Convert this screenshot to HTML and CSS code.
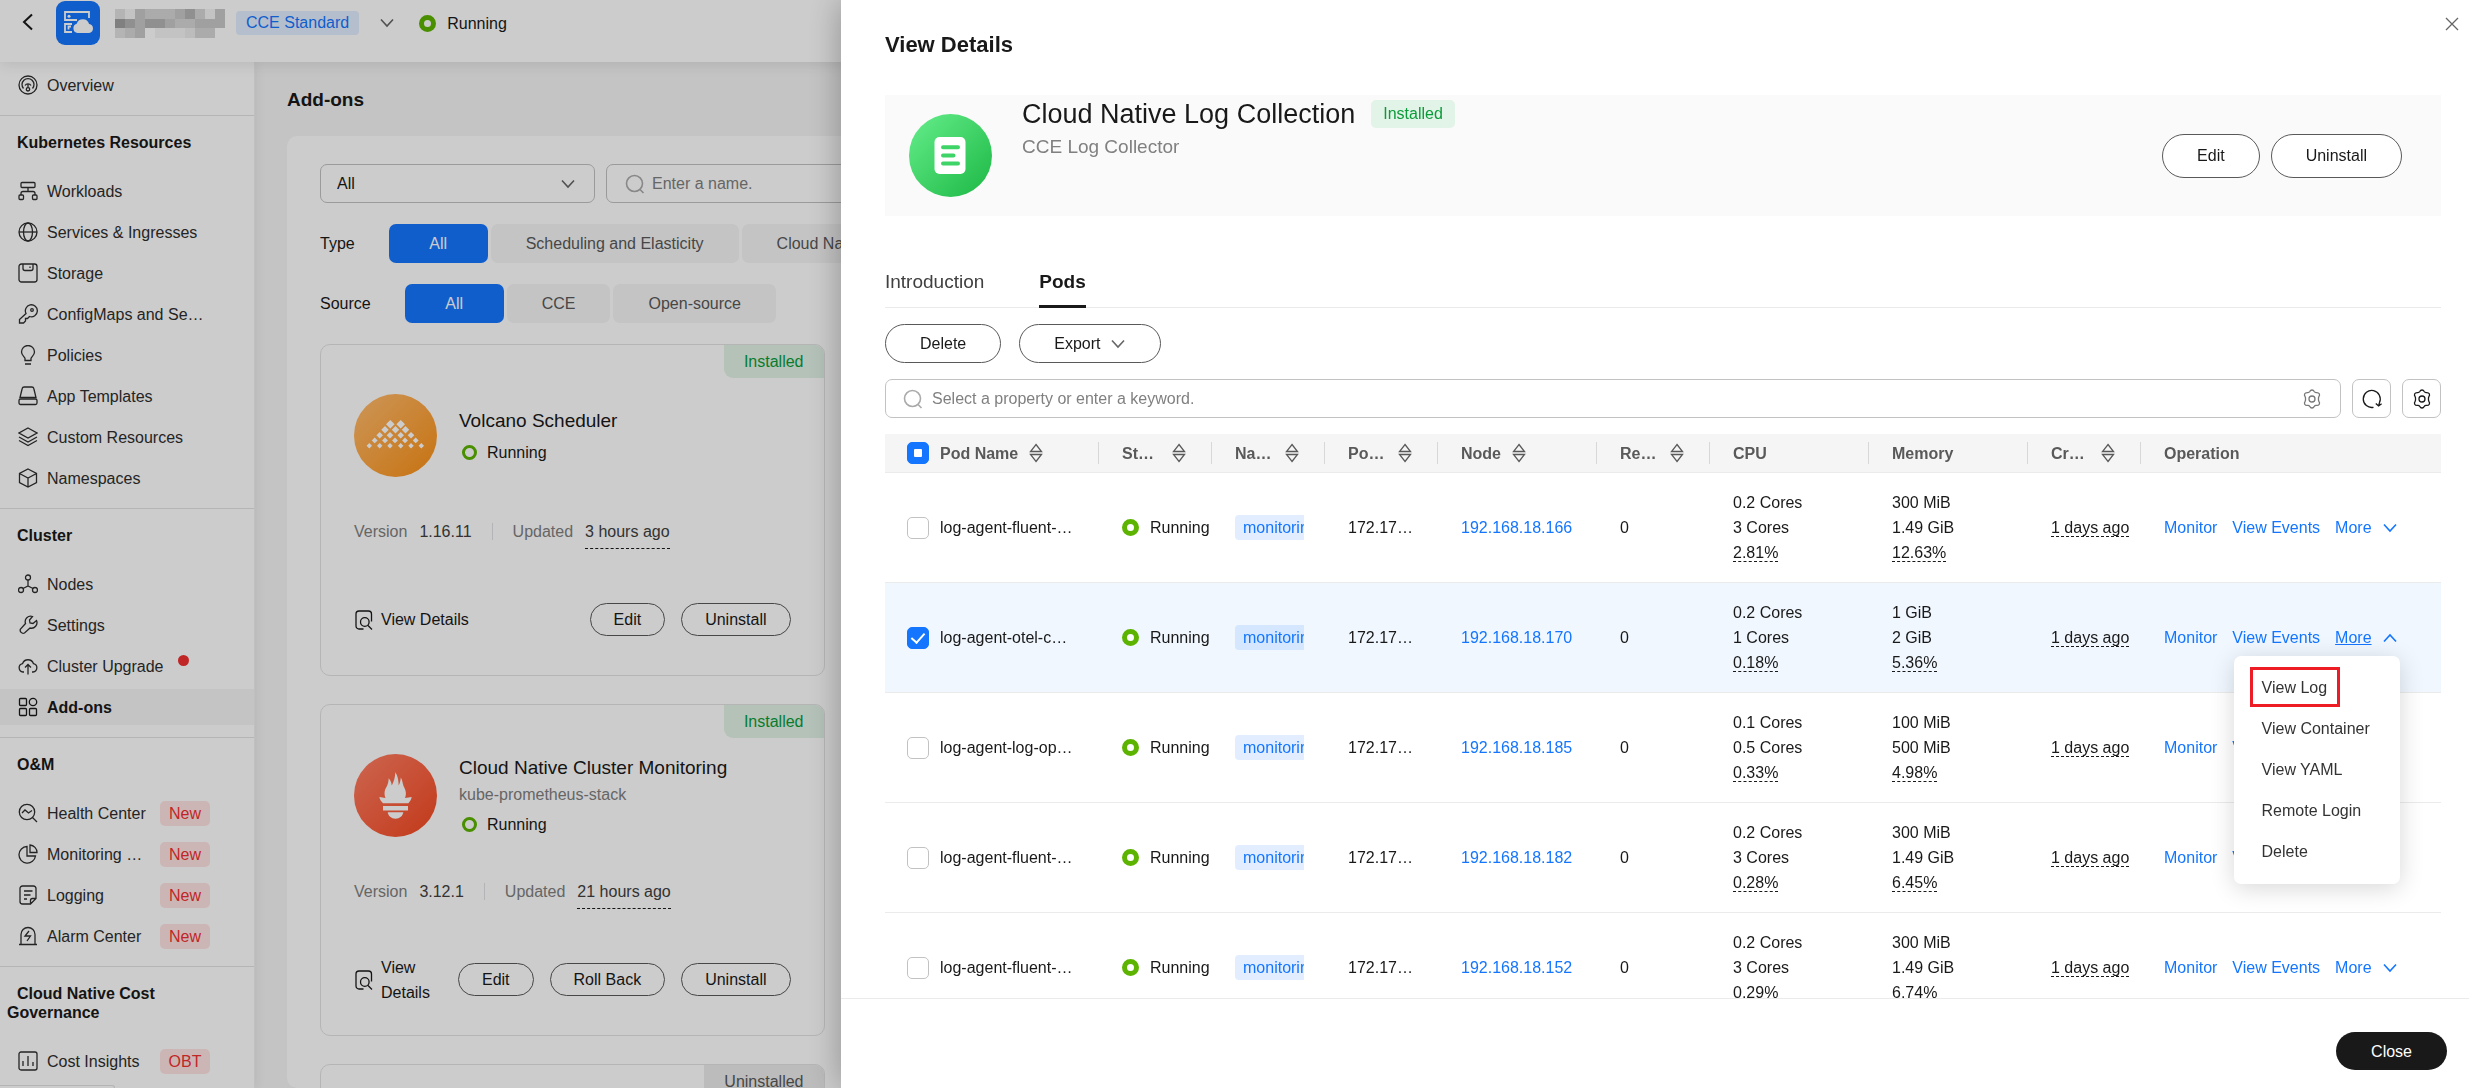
FILE: index.html
```html
<!DOCTYPE html>
<html lang="en">
<head>
    <meta charset="UTF-8">
    <meta name="viewport" content="width=device-width, initial-scale=1.0">
    <title>Add-ons - CCE</title>
    <link rel="stylesheet" href="styles.css">
</head>
<body>
    <!-- Shared icons -->
    <svg class="sprite" aria-hidden="true">
        <symbol id="i-chevron" viewBox="0 0 16 16"><path d="M2 4.5l6 6.5 6-6.5" /></symbol>
        <symbol id="i-search" viewBox="0 0 20 20"><circle cx="9.5" cy="9.5" r="8" /><path d="M15 15.5l3.5 3.5" /></symbol>
        <symbol id="i-sort" viewBox="0 0 14 20"><path d="M7 1.500l5.500 7h-11zM7 18.500l5.500-7h-11z" /></symbol>
        <symbol id="i-gear" viewBox="0 0 20 20"><path d="M10 1c1.200 0 1.700.5 2.200 1.500.5.9 1.200 1.200 2.200 1.100 1.400-.1 2.300.1 2.900 1.200.6 1.100.3 1.800-.4 2.800-.6.9-.6 3.900 0 4.800.7 1 1 1.700.4 2.800-.6 1.100-1.500 1.300-2.900 1.200-1-.1-1.700.2-2.200 1.100-.5 1-1 1.500-2.200 1.500s-1.700-.5-2.200-1.500c-.5-.9-1.200-1.200-2.200-1.100-1.400.1-2.300-.1-2.900-1.200-.6-1.100-.3-1.800.4-2.800.6-.9.6-3.900 0-4.800-.7-1-1-1.700-.4-2.800.6-1.100 1.500-1.300 2.900-1.200 1 .1 1.700-.2 2.200-1.100C8.300 1.500 8.800 1 10 1z" /><circle cx="10" cy="10" r="3" /></symbol>
        <symbol id="i-view" viewBox="0 0 20 20"><path d="M9.500 19H5a3 3 0 0 1-3-3V4a3 3 0 0 1 3-3h9.500a3 3 0 0 1 3 3v7.500" /><circle cx="10.8" cy="12" r="4.300" /><path d="M14 15.500l4 4" /></symbol>
    </svg>

    <header class="topbar">
        <button class="back" aria-label="Back"><svg viewBox="0 0 12 18"><path d="M10 1.500L2 9l8 7.500" /></svg></button>
        <svg class="logo" viewBox="0 0 44 44">
            <rect width="44" height="44" rx="9" fill="#1476ff" />
            <g fill="none" stroke="#fff" stroke-width="1.8"><path d="M33 17v-6H9v8h12M16 23H9v8h7" /><path d="M15 25.500h-2.500v3" /></g>
            <circle cx="13" cy="15.2" r="1.5" fill="#fff" />
            <path d="M21.500 32a4.800 4.800 0 0 1-.8-9.300 6.500 6.500 0 0 1 12.400.2A4.600 4.600 0 0 1 33 32z" fill="#fff" />
        </svg>
        <svg class="mosaic" viewBox="0 0 11 3" preserveAspectRatio="none" shape-rendering="crispEdges">
            <path fill="#e2e2e2" d="M0 0h1v1H0zM8 2h1v1H8zM0 2h1v1H0z" /><path fill="#f4f4f4" d="M1 0h1v1H1zM9 0h1v1H9zM4 2h3v1H4z" />
            <path fill="#c8c8c8" d="M2 0h1v1H2zM6 0h1v1H6zM10 0h1v1h-1zM2 1h1v1H2zM5 1h1v1H5zM8 1h3v1H8zM2 2h1v1H2z" />
            <path fill="#d6d6d6" d="M3 0h3v1H3zM8 0h1v1H8zM6 1h2v1H6zM1 2h1v1H1zM8 2h2v1H8z" /><path fill="#b5b5b5" d="M7 0h1v1H7zM1 1h1v1H1zM3 1h2v1H3z" />
            <path fill="#a0a0a0" d="M0 1h1v1H0z" /><path fill="#ececec" d="M7 2h1v1H7z" />
        </svg>
        <span class="chip">CCE Standard</span>
        <button class="switcher" aria-label="Switch cluster"><svg class="icon-sm"><use href="#i-chevron" /></svg></button>
        <span class="state"><i class="ring"></i>Running</span>
    </header>

    <div class="page">
        <nav class="sidebar">
            <ul class="menu menu-top">
                <li><a href="#"><svg viewBox="0 0 20 20"><circle cx="10" cy="10" r="9" /><path d="M5.500 13.500a6 6 0 1 1 9 0M7 10.500a3.500 3.500 0 0 1 6 0" /><circle cx="10" cy="14.3" r="1.7" /><path d="M10 9v3.600" /></svg>Overview</a></li>
            </ul>
            <section>
                <h2>Kubernetes Resources</h2>
                <ul class="menu">
                    <li><a href="#"><svg viewBox="0 0 20 20"><rect x="3" y="1.5" width="14" height="5" rx="1" /><path d="M10 6.500v4M3 14v-1.500q0-2 2-2h10q2 0 2 2V14" /><rect x="1" y="14" width="4.5" height="4.5" rx="1" /><rect x="14.5" y="14" width="4.5" height="4.5" rx="1" /></svg>Workloads</a></li>
                    <li><a href="#"><svg viewBox="0 0 20 20"><circle cx="10" cy="10" r="9" /><ellipse cx="10" cy="10" rx="4.5" ry="9" /><path d="M1 10h18" /></svg>Services &amp; Ingresses</a></li>
                    <li><a href="#"><svg viewBox="0 0 20 20"><rect x="1" y="1" width="18" height="18" rx="2.5" /><path d="M5 1v4.500q0 2 2 2h6q2 0 2-2V1M12 3.500v1.500" /></svg>Storage</a></li>
                    <li><a href="#"><svg viewBox="0 0 20 20"><path d="M8 9.500a6 6 0 1 1 3.500 3L9.500 14.500H7.500V17l-2 2H1.500v-3.500z" /><circle cx="14" cy="6" r="1.3" /></svg>ConfigMaps and Se…</a></li>
                    <li><a href="#"><svg viewBox="0 0 20 20"><path d="M7 15.500v-2c0-1.500-3.500-3-3.500-6.500a6.500 6.500 0 0 1 13 0c0 3.500-3.500 5-3.500 6.500v2zM7 19h6" /></svg>Policies</a></li>
                    <li><a href="#"><svg viewBox="0 0 20 20"><path d="M2 11.500l2.200-9q.3-1.500 2-1.500h7.600q1.700 0 2 1.500l2.200 9z" /><rect x="1" y="13" width="18" height="5.5" rx="1.5" /></svg>App Templates</a></li>
                    <li><a href="#"><svg viewBox="0 0 20 20"><path d="M10 1l9 5-9 5-9-5zM1 10l9 5 9-5M1 13.500l9 5 9-5" /></svg>Custom Resources</a></li>
                    <li><a href="#"><svg viewBox="0 0 20 20"><path d="M10 1l8.500 4.500v9L10 19l-8.500-4.500v-9zM1.500 5.500L10 10l8.500-4.500M10 10v9" /></svg>Namespaces</a></li>
                </ul>
            </section>
            <section>
                <h2>Cluster</h2>
                <ul class="menu">
                    <li><a href="#"><svg viewBox="0 0 20 20"><circle cx="10" cy="3.5" r="2.5" /><circle cx="3" cy="16" r="2.5" /><circle cx="17" cy="16" r="2.5" /><path d="M10 6v6M5 14.500l5-2.500 5 2.500" /></svg>Nodes</a></li>
                    <li><a href="#"><svg viewBox="0 0 20 20"><path d="M14.500 1.500a5.500 5.500 0 0 0-7 7l-5 5.500a3 3 0 0 0 4 4l5.500-5a5.500 5.500 0 0 0 6.500-7.500L15 8.500l-3-.5-.5-3z" /></svg>Settings</a></li>
                    <li><a href="#"><svg viewBox="0 0 20 20"><path d="M6 16H5a4.200 4.200 0 0 1-.5-8.300 5.800 5.800 0 0 1 11 0A4.200 4.200 0 0 1 15 16h-1M10 18.500V9M7 11.500L10 8.500l3 3" /></svg>Cluster Upgrade<i class="dot"></i></a></li>
                    <li><a href="#" class="active"><svg viewBox="0 0 20 20"><rect x="1.5" y="1.5" width="7" height="7" rx="1" /><circle cx="15" cy="5" r="3.7" /><rect x="1.5" y="11.5" width="7" height="7" rx="1" /><rect x="11.5" y="11.5" width="7" height="7" rx="1" /></svg>Add-ons</a></li>
                </ul>
            </section>
            <section>
                <h2>O&amp;M</h2>
                <ul class="menu">
                    <li><a href="#"><svg viewBox="0 0 20 20"><circle cx="9" cy="9" r="7.7" /><path d="M14.500 14.500l4.500 4.500M4 10l3-3 3.500 3 3.500-2.500" /></svg><span class="name">Health Center</span><span class="tag">New</span></a></li>
                    <li><a href="#"><svg viewBox="0 0 20 20"><path d="M9 2.500a8.300 8.300 0 1 0 8.500 9.500H9z" /><path d="M12 1v7.500h7A7.500 7.500 0 0 0 12 1z" /></svg><span class="name">Monitoring …</span><span class="tag">New</span></a></li>
                    <li><a href="#"><svg viewBox="0 0 20 20"><path d="M12.500 19H4.500a2.500 2.500 0 0 1-2.500-2.500v-13A2.500 2.500 0 0 1 4.500 1h11A2.500 2.500 0 0 1 18 3.500v10zM12.500 19v-3.500q0-2 2-2H18M6 6h8.500M6 10h6.500M6 14h3" /></svg><span class="name">Logging</span><span class="tag">New</span></a></li>
                    <li><a href="#"><svg viewBox="0 0 20 20"><path d="M3 18.500V8.500a7 7 0 0 1 14 0v10M1 18.500h18M11 5l-4 5h5.500l-3.500 5" /></svg><span class="name">Alarm Center</span><span class="tag">New</span></a></li>
                </ul>
            </section>
            <section>
                <h2>Cloud Native Cost Governance</h2>
                <ul class="menu">
                    <li><a href="#"><svg viewBox="0 0 20 20"><rect x="1" y="1" width="18" height="18" rx="2" /><path d="M5 15v-5M10 15V5M15 15v-4" /></svg><span class="name">Cost Insights</span><span class="tag">OBT</span></a></li>
                </ul>
            </section>
        </nav>

        <main class="content">
            <h1>Add-ons</h1>
            <div class="panel">
                <div class="filters">
                    <div class="field select-field">
                        <select aria-label="Add-on status"><option>All</option></select>
                        <svg class="icon-sm"><use href="#i-chevron" /></svg>
                    </div>
                    <label class="field search-field">
                        <svg class="icon-search"><use href="#i-search" /></svg>
                        <input type="text" placeholder="Enter a name.">
                    </label>
                </div>
                <div class="pills">
                    <span>Type</span>
                    <div class="pill-group">
                        <button class="pill on">All</button>
                        <button class="pill">Scheduling and Elasticity</button>
                        <button class="pill">Cloud Native Observability</button>
                    </div>
                </div>
                <div class="pills">
                    <span>Source</span>
                    <div class="pill-group">
                        <button class="pill on">All</button>
                        <button class="pill">CCE</button>
                        <button class="pill">Open-source</button>
                    </div>
                </div>

                <div class="cards">
                    <article class="card">
                        <span class="corner">Installed</span>
                        <div class="card-head">
                            <svg class="addon-icon" viewBox="0 0 83 83">
                                <defs>
                                    <linearGradient id="g-orange" x1="0" y1="0" x2="1" y2="1"><stop offset="0.1" stop-color="#ffb866" /><stop offset="0.9" stop-color="#fb941e" /></linearGradient>
                                </defs>
                                <circle cx="41.5" cy="41.5" r="41.5" fill="url(#g-orange)" />
                                <path fill="#fff" d="M36.300 26l4.300 4.300-4.300 4.300-4.300-4.300zM46.700 26l4.300 4.300-4.300 4.300-4.300-4.300zM31 32l3.700 3.700-3.700 3.700-3.700-3.700zM41.500 32l3.700 3.700-3.700 3.700-3.700-3.700zM51.500 32l3.700 3.700-3.700 3.700-3.700-3.700zM25.700 38l3.300 3.300-3.300 3.300-3.300-3.300zM36 38l3.300 3.300-3.300 3.300-3.300-3.300zM46.700 38l3.300 3.300-3.300 3.300-3.300-3.300zM57 38l3.300 3.300-3.300 3.300-3.300-3.300zM20.700 43.500l2.900 2.900-2.900 2.900-2.900-2.900zM31 43.500l2.900 2.900-2.900 2.900-2.900-2.900zM41 43.500l2.900 2.900-2.900 2.900-2.900-2.900zM51 43.500l2.900 2.900-2.900 2.900-2.900-2.900zM61.700 43.500l2.900 2.900-2.900 2.900-2.900-2.900zM15.300 49l2.700 2.700-2.700 2.700-2.700-2.700zM25.700 49l2.700 2.700-2.700 2.700-2.700-2.700zM36 49l2.700 2.700-2.700 2.700-2.700-2.700zM46.700 49l2.700 2.700-2.700 2.700-2.700-2.700zM57 49l2.700 2.700-2.700 2.700-2.700-2.700zM67.300 49l2.700 2.700-2.700 2.700-2.700-2.700z" />
                            </svg>
                            <div>
                                <h3>Volcano Scheduler</h3>
                                <p class="status"><i class="ring thin"></i>Running</p>
                            </div>
                        </div>
                        <div class="meta">
                            <span class="key">Version</span><span>1.16.11</span>
                            <i class="bar"></i>
                            <span class="key">Updated</span><span class="dashed">3 hours ago</span>
                        </div>
                        <div class="actions">
                            <a href="#" class="view"><svg><use href="#i-view" /></svg>View Details</a>
                            <button class="btn">Edit</button>
                            <button class="btn">Uninstall</button>
                        </div>
                    </article>

                    <article class="card">
                        <span class="corner">Installed</span>
                        <div class="card-head">
                            <svg class="addon-icon" viewBox="0 0 83 83">
                                <defs>
                                    <linearGradient id="g-red" x1="0" y1="0" x2="1" y2="1"><stop offset="0.1" stop-color="#ff7a5e" /><stop offset="0.9" stop-color="#f54d27" /></linearGradient>
                                </defs>
                                <circle cx="41.5" cy="41.5" r="41.5" fill="url(#g-red)" />
                                <g fill="#fff">
                                    <path d="M25.300 43l6.200 1c-2-5-.5-9 1.500-12 1.200-2.500 1.500-5 1.700-7.700 2 2.200 2.800 4.700 3 7.200 2-3.500 3.500-8 3.600-13.200 2.700 4 3.200 8 3.400 13.200 1.300-2.500 1.800-5 2.100-8 1.700 2.800 1.700 5.500 2.700 8.500 1.800 3.500 3.500 7 1.500 12l6.700-1c-.5 2.500-1.700 4.500-3.300 6.200H29c-1.800-1.700-3.200-3.700-3.700-6.200z" />
                                    <rect x="29" y="52" width="25" height="4.5" />
                                    <path d="M33.700 58.300h15.600c-.5 3.700-3.500 6.400-7.800 6.400s-7.300-2.700-7.800-6.400z" />
                                </g>
                            </svg>
                            <div>
                                <h3>Cloud Native Cluster Monitoring</h3>
                                <p class="sub">kube-prometheus-stack</p>
                                <p class="status"><i class="ring thin"></i>Running</p>
                            </div>
                        </div>
                        <div class="meta">
                            <span class="key">Version</span><span>3.12.1</span>
                            <i class="bar"></i>
                            <span class="key">Updated</span><span class="dashed">21 hours ago</span>
                        </div>
                        <div class="actions">
                            <a href="#" class="view"><svg><use href="#i-view" /></svg>View Details</a>
                            <button class="btn">Edit</button>
                            <button class="btn">Roll Back</button>
                            <button class="btn">Uninstall</button>
                        </div>
                    </article>

                    <article class="card">
                        <span class="corner off">Uninstalled</span>
                    </article>
                </div>
            </div>
        </main>
    </div>

    <div class="status-bubble"></div>
    <div class="backdrop"></div>

    <aside class="drawer">
        <button class="drawer-x" aria-label="Close panel"><svg viewBox="0 0 14 14"><path d="M1 1l12 12M13 1L1 13" /></svg></button>
        <h2 class="drawer-title">View Details</h2>

        <div class="drawer-body">
            <div class="info">
                <svg class="addon-icon" viewBox="0 0 83 83">
                    <defs>
                        <linearGradient id="g-green" x1="0" y1="0" x2="1" y2="1"><stop offset="0.1" stop-color="#5ee884" /><stop offset="0.9" stop-color="#23bd4b" /></linearGradient>
                    </defs>
                    <circle cx="41.5" cy="41.5" r="41.5" fill="url(#g-green)" />
                    <rect x="25.5" y="23" width="31" height="37" rx="5" fill="#fff" />
                    <path d="M34 33.200h15M34 41.500h10.500M34 49.500h15" stroke="#3fd468" stroke-width="4" stroke-linecap="round" />
                </svg>
                <div class="info-text">
                    <div class="info-name"><h3>Cloud Native Log Collection</h3><span class="installed">Installed</span></div>
                    <p>CCE Log Collector</p>
                </div>
                <button class="btn big">Edit</button>
                <button class="btn big">Uninstall</button>
            </div>

            <div class="tabs">
                <a href="#">Introduction</a>
                <a href="#" class="current">Pods</a>
            </div>

            <div class="toolbar">
                <button class="btn mid">Delete</button>
                <button class="btn mid">Export<svg class="icon-sm"><use href="#i-chevron" /></svg></button>
            </div>

            <div class="searchbar">
                <label class="field keyword">
                    <svg class="icon-search"><use href="#i-search" /></svg>
                    <input type="text" placeholder="Select a property or enter a keyword.">
                    <svg class="icon-gear"><use href="#i-gear" /></svg>
                </label>
                <button class="square" aria-label="Refresh"><svg viewBox="0 0 20 20"><path d="M11.500 18.300A8.500 8.500 0 1 1 17.500 13.500L16.800 16.200M13.800 14.500l2.800 2.500 3-2.200" /></svg></button>
                <button class="square" aria-label="Settings"><svg><use href="#i-gear" /></svg></button>
            </div>

            <table class="pods">
                <colgroup>
                    <col class="c-name"><col class="c-narrow"><col class="c-narrow"><col class="c-narrow"><col class="c-wide"><col class="c-narrow"><col class="c-wide"><col class="c-wide"><col class="c-narrow"><col>
                </colgroup>
                <thead>
                    <tr>
                        <th><div class="th first"><input type="checkbox" class="some" aria-label="Select all pods">Pod Name<svg><use href="#i-sort" /></svg></div></th>
                        <th><div class="th narrow">St…<svg><use href="#i-sort" /></svg></div></th>
                        <th><div class="th narrow">Na…<svg><use href="#i-sort" /></svg></div></th>
                        <th><div class="th narrow">Po…<svg><use href="#i-sort" /></svg></div></th>
                        <th><div class="th">Node<svg><use href="#i-sort" /></svg></div></th>
                        <th><div class="th narrow">Re…<svg><use href="#i-sort" /></svg></div></th>
                        <th>CPU</th>
                        <th>Memory</th>
                        <th><div class="th narrow">Cr…<svg><use href="#i-sort" /></svg></div></th>
                        <th>Operation</th>
                    </tr>
                </thead>
                <tbody>
                    <tr>
                        <td><label class="pod"><input type="checkbox">log-agent-fluent-…</label></td>
                        <td><span class="state"><i class="ring"></i>Running</span></td>
                        <td><div class="clip"><span class="ns">monitoring</span></div></td>
                        <td>172.17…</td>
                        <td><a href="#">192.168.18.166</a></td>
                        <td>0</td>
                        <td>0.2 Cores<br>3 Cores<br><span class="dashed">2.81%</span></td>
                        <td>300 MiB<br>1.49 GiB<br><span class="dashed">12.63%</span></td>
                        <td><span class="dashed">1 days ago</span></td>
                        <td><div class="ops"><a href="#">Monitor</a><a href="#">View Events</a><a href="#" class="more">More<svg class="icon-sm"><use href="#i-chevron" /></svg></a></div></td>
                    </tr>
                    <tr class="selected">
                        <td><label class="pod"><input type="checkbox" checked>log-agent-otel-c…</label></td>
                        <td><span class="state"><i class="ring"></i>Running</span></td>
                        <td><div class="clip"><span class="ns">monitoring</span></div></td>
                        <td>172.17…</td>
                        <td><a href="#">192.168.18.170</a></td>
                        <td>0</td>
                        <td>0.2 Cores<br>1 Cores<br><span class="dashed">0.18%</span></td>
                        <td>1 GiB<br>2 GiB<br><span class="dashed">5.36%</span></td>
                        <td><span class="dashed">1 days ago</span></td>
                        <td>
                            <div class="ops">
                                <a href="#">Monitor</a><a href="#">View Events</a>
                                <div class="more-wrap">
                                    <a href="#" class="more open"><u>More</u><svg class="icon-sm"><use href="#i-chevron" /></svg></a>
                                    <ul class="dropdown">
                                        <li><a href="#" class="marked">View Log</a></li>
                                        <li><a href="#">View Container</a></li>
                                        <li><a href="#">View YAML</a></li>
                                        <li><a href="#">Remote Login</a></li>
                                        <li><a href="#">Delete</a></li>
                                    </ul>
                                </div>
                            </div>
                        </td>
                    </tr>
                    <tr>
                        <td><label class="pod"><input type="checkbox">log-agent-log-op…</label></td>
                        <td><span class="state"><i class="ring"></i>Running</span></td>
                        <td><div class="clip"><span class="ns">monitoring</span></div></td>
                        <td>172.17…</td>
                        <td><a href="#">192.168.18.185</a></td>
                        <td>0</td>
                        <td>0.1 Cores<br>0.5 Cores<br><span class="dashed">0.33%</span></td>
                        <td>100 MiB<br>500 MiB<br><span class="dashed">4.98%</span></td>
                        <td><span class="dashed">1 days ago</span></td>
                        <td><div class="ops"><a href="#">Monitor</a><a href="#">View Events</a><a href="#" class="more">More<svg class="icon-sm"><use href="#i-chevron" /></svg></a></div></td>
                    </tr>
                    <tr>
                        <td><label class="pod"><input type="checkbox">log-agent-fluent-…</label></td>
                        <td><span class="state"><i class="ring"></i>Running</span></td>
                        <td><div class="clip"><span class="ns">monitoring</span></div></td>
                        <td>172.17…</td>
                        <td><a href="#">192.168.18.182</a></td>
                        <td>0</td>
                        <td>0.2 Cores<br>3 Cores<br><span class="dashed">0.28%</span></td>
                        <td>300 MiB<br>1.49 GiB<br><span class="dashed">6.45%</span></td>
                        <td><span class="dashed">1 days ago</span></td>
                        <td><div class="ops"><a href="#">Monitor</a><a href="#">View Events</a><a href="#" class="more">More<svg class="icon-sm"><use href="#i-chevron" /></svg></a></div></td>
                    </tr>
                    <tr>
                        <td><label class="pod"><input type="checkbox">log-agent-fluent-…</label></td>
                        <td><span class="state"><i class="ring"></i>Running</span></td>
                        <td><div class="clip"><span class="ns">monitoring</span></div></td>
                        <td>172.17…</td>
                        <td><a href="#">192.168.18.152</a></td>
                        <td>0</td>
                        <td>0.2 Cores<br>3 Cores<br><span class="dashed">0.29%</span></td>
                        <td>300 MiB<br>1.49 GiB<br><span class="dashed">6.74%</span></td>
                        <td><span class="dashed">1 days ago</span></td>
                        <td><div class="ops"><a href="#">Monitor</a><a href="#">View Events</a><a href="#" class="more">More<svg class="icon-sm"><use href="#i-chevron" /></svg></a></div></td>
                    </tr>
                </tbody>
            </table>
        </div>

        <footer class="drawer-foot">
            <button class="close">Close</button>
        </footer>
    </aside>
</body>
</html>
```

FILE: styles.css
```css
:root {
    --text: #191919;
    --muted: #808080;
    --soft: #595959;
    --line: #ebebeb;
    --border: #c2c2c2;
    --blue: #1476ff;
    --green: #5cb300;
    --tag-blue: rgba(20, 118, 255, 0.12);
}

* {
    margin: 0;
    padding: 0;
    box-sizing: border-box;
}

body {
    height: 100vh;
    overflow: hidden;
    display: flex;
    flex-direction: column;
    font-family: "Liberation Sans", Arial, sans-serif;
    font-size: 16px;
    line-height: 25px;
    color: var(--text);
    background: #f5f5f5;
}

button, input, select {
    font: inherit;
    color: inherit;
    background: none;
    border: none;
    outline: none;
}

button {
    cursor: pointer;
}

ul {
    list-style: none;
}

a {
    color: inherit;
    text-decoration: none;
}

svg {
    flex: none;
    fill: none;
    stroke: currentColor;
    stroke-width: 1.3;
}

svg [fill]:not([stroke]) {
    stroke: none;
}

.sprite {
    position: absolute;
    width: 0;
    height: 0;
}

.icon-sm {
    width: 16px;
    height: 16px;
    stroke-width: 1.6;
    color: #666;
}

.icon-search {
    width: 20px;
    height: 20px;
    color: #aaa;
    stroke-width: 1.6;
}

.ring {
    flex: none;
    width: 17px;
    height: 17px;
    border: 5px solid var(--green);
    border-radius: 50%;
    background: #fff;
}

.ring.thin {
    width: 15px;
    height: 15px;
    border-width: 3px;
}

/* Top bar */
.topbar {
    position: relative;
    z-index: 2;
    display: flex;
    align-items: flex-start;
    height: 62px;
    padding: 1px 22px;
    background: #fff;
    box-shadow: 0 2px 14px rgba(0, 0, 0, 0.1);
}

.back {
    height: 42px;
}

.back svg {
    display: block;
    width: 12px;
    height: 18px;
    stroke-width: 2;
}

.logo {
    width: 44px;
    height: 44px;
    margin: 0 15px 0 22px;
}

.mosaic {
    width: 110px;
    height: 29px;
    margin-top: 8px;
}

.chip {
    height: 24px;
    margin: 10px 20px 0 11px;
    padding: 0 10px;
    line-height: 24px;
    border-radius: 4px;
    color: var(--blue);
    background: var(--tag-blue);
}

.switcher {
    height: 44px;
    margin-right: 24px;
}

.switcher svg {
    display: block;
}

.state {
    display: flex;
    align-items: center;
    gap: 11px;
    white-space: nowrap;
}

.topbar .state {
    height: 44px;
}

/* Page */
.page {
    flex: 1;
    display: flex;
    min-height: 0;
}

.sidebar {
    flex: none;
    width: 255px;
    overflow: hidden;
    border-right: 1px solid #f0f0f0;
    background: #fff;
    box-shadow: 2px 0 10px rgba(0, 0, 0, 0.06);
}

.sidebar section {
    border-top: 1px solid #e3e3e3;
}

.sidebar h2 {
    padding: 17px 60px 19px 7px;
    font-size: 16px;
    line-height: 19px;
    text-indent: 10px;
}

.menu {
    display: flex;
    flex-direction: column;
    gap: 5px;
    padding: 2px 0 12px;
}

.menu-top {
    padding-top: 5px;
}

.menu a {
    display: flex;
    align-items: center;
    height: 36px;
    padding-left: 18px;
    color: #2e2e2e;
}

.menu a.active {
    font-weight: bold;
    color: var(--text);
    background: #f5f5f5;
}

.menu svg {
    width: 20px;
    height: 20px;
    margin-right: 9px;
}

.menu .name {
    width: 113px;
}

.tag {
    width: 50px;
    border-radius: 5px;
    text-align: center;
    color: #f23030;
    background: #ffe3e3;
}

.dot {
    width: 11px;
    height: 11px;
    margin: 0 0 12px 14px;
    border-radius: 50%;
    background: #f23030;
}

.content {
    flex: 1;
    display: flex;
    flex-direction: column;
    min-width: 0;
    padding: 25px 32px 0;
}

.content h1 {
    margin-bottom: 23px;
    font-size: 19px;
    line-height: 26px;
}

.panel {
    flex: 1;
    min-height: 0;
    padding: 28px 33px;
    border-radius: 10px;
    background: #fff;
}

.filters {
    display: flex;
    gap: 11px;
    margin-bottom: 21px;
}

.field {
    display: flex;
    align-items: center;
    height: 39px;
    border: 1px solid var(--border);
    border-radius: 7px;
    background: #fff;
}

.field input {
    flex: 1;
    min-width: 0;
}

.field input::placeholder {
    color: var(--muted);
    opacity: 1;
}

.select-field {
    width: 275px;
    padding: 0 18px 0 16px;
}

.select-field select {
    flex: 1;
    appearance: none;
}

.search-field {
    flex: 1;
    gap: 7px;
    padding: 0 18px;
}

.pills {
    display: flex;
    align-items: center;
    gap: 34px;
    margin-bottom: 21px;
}

.pill-group {
    display: flex;
    gap: 3px;
}

.pill {
    min-width: 99px;
    height: 39px;
    padding: 0 35px;
    border-radius: 7px;
    color: var(--soft);
    background: #f5f5f5;
}

.pill.on {
    color: #fff;
    background: var(--blue);
}

.cards {
    display: grid;
    grid-template-columns: repeat(4, 1fr);
    gap: 28px 22px;
}

.card {
    position: relative;
    grid-column: 1;
    display: flex;
    flex-direction: column;
    min-height: 332px;
    padding: 49px 33px 39px;
    border: 1px solid #e3e3e3;
    border-radius: 10px;
    overflow: hidden;
}

.corner {
    position: absolute;
    top: 0;
    right: 0;
    height: 33px;
    padding: 0 20px;
    line-height: 33px;
    border-bottom-left-radius: 9px;
    color: #0a9c38;
    background: #e2f3e7;
}

.corner.off {
    color: var(--soft);
    background: #ebebeb;
}

.card-head {
    display: flex;
    align-items: center;
    gap: 22px;
    height: 83px;
}

.addon-icon {
    width: 83px;
    height: 83px;
}

.card h3 {
    font-size: 19px;
    font-weight: normal;
    line-height: 28px;
}

.sub {
    color: var(--muted);
}

.status {
    display: flex;
    align-items: center;
    gap: 10px;
    margin-top: 5px;
    padding-left: 3px;
}

.meta {
    display: flex;
    gap: 12px;
    margin-top: 42px;
    color: #404040;
}

.meta .key {
    color: var(--muted);
}

.meta .bar {
    width: 1px;
    height: 17px;
    margin: 4px 8px;
    background: #dfe1e6;
}

.dashed {
    border-bottom: 1px dashed var(--text);
}

.meta .dashed {
    padding-bottom: 4px;
}

.actions {
    display: flex;
    align-items: center;
    gap: 16px;
    height: 33px;
    margin-top: auto;
}

.view {
    display: flex;
    align-items: center;
    gap: 7px;
    flex: 1;
}

.view svg {
    width: 20px;
    height: 20px;
}

.btn {
    display: flex;
    align-items: center;
    gap: 9px;
    height: 33px;
    padding: 0 23px;
    border: 1px solid var(--soft);
    border-radius: 22px;
    white-space: nowrap;
}

.btn.big {
    height: 44px;
    padding: 0 34px;
    background: #fff;
}

.btn.mid {
    height: 39px;
    padding: 0 34px;
}

/* Corner of the link preview at the bottom of the window */
.status-bubble {
    position: fixed;
    left: 0;
    bottom: 0;
    width: 115px;
    height: 3px;
    border: 1px solid #e3e3e3;
    border-width: 1px 1px 0 0;
    border-top-right-radius: 3px;
    background: #fff;
}

/* Drawer */
.backdrop {
    position: fixed;
    inset: 0;
    z-index: 5;
    background: rgba(0, 0, 0, 0.2);
}

.drawer {
    position: fixed;
    top: 0;
    right: 0;
    bottom: 0;
    left: 841px;
    z-index: 6;
    display: flex;
    flex-direction: column;
    background: #fff;
    box-shadow: 0 0 32px rgba(0, 0, 0, 0.3);
}

.drawer-x {
    position: absolute;
    top: 17px;
    right: 10px;
}

.drawer-x svg {
    display: block;
    width: 14px;
    height: 14px;
    color: #666;
}

.drawer-title {
    padding: 32px 44px 37px;
    font-size: 22px;
    line-height: 26px;
}

.drawer-body {
    flex: 1;
    min-height: 0;
    padding: 0 28px 0 44px;
    overflow: hidden;
}

.info {
    display: flex;
    align-items: center;
    gap: 11px;
    padding-right: 39px;
    background: #fafafa;
}

.info .addon-icon {
    margin: 19px 19px 19px 24px;
}

.info-text {
    flex: 1;
    align-self: flex-start;
    padding-top: 4px;
}

.info-name {
    display: flex;
    align-items: center;
    gap: 16px;
}

.info-name h3 {
    font-size: 27px;
    font-weight: normal;
    line-height: 30px;
}

.info-text p {
    margin-top: 3px;
    font-size: 19px;
    line-height: 30px;
    color: var(--muted);
}

.installed {
    padding: 0 12px;
    line-height: 28px;
    border-radius: 5px;
    color: #0a9c38;
    background: #e2f3e7;
}

.tabs {
    display: flex;
    gap: 55px;
    margin: 50px 0 16px;
    font-size: 19px;
    line-height: 32px;
    color: #404040;
    box-shadow: inset 0 -1px var(--line);
}

.tabs a {
    padding-bottom: 7px;
    border-bottom: 3px solid transparent;
}

.tabs .current {
    font-weight: bold;
    color: var(--text);
    border-color: var(--text);
}

.toolbar {
    display: flex;
    gap: 18px;
}

.searchbar {
    display: flex;
    gap: 11px;
    margin: 16px 0;
}

.keyword {
    flex: 1;
    gap: 9px;
    padding: 0 18px 0 17px;
}

.icon-gear {
    width: 20px;
    height: 20px;
    color: #777;
}

.square {
    display: flex;
    align-items: center;
    justify-content: center;
    width: 39px;
    height: 39px;
    border: 1px solid var(--border);
    border-radius: 7px;
}

.square svg {
    width: 20px;
    height: 20px;
}

.pods {
    width: 100%;
    table-layout: fixed;
    border-collapse: separate;
    border-spacing: 0;
}

.c-name {
    width: 214px;
}

.c-narrow {
    width: 113px;
}

.c-wide {
    width: 159px;
}

.pods th {
    height: 39px;
    padding-left: 23px;
    text-align: left;
    color: var(--soft);
    border-bottom: 1px solid var(--line);
    background: linear-gradient(#d8d8d8, #d8d8d8) right center / 1px 22px no-repeat #f5f5f5;
}

.pods th:last-child {
    background: #f5f5f5;
}

.th {
    display: flex;
    align-items: center;
    gap: 11px;
}

.th svg {
    width: 14px;
    height: 20px;
}

.th.narrow {
    justify-content: space-between;
    padding-right: 26px;
}

.pods td {
    height: 110px;
    padding-left: 23px;
    border-bottom: 1px solid var(--line);
    white-space: nowrap;
}

.pods th:first-child,
.pods td:first-child {
    padding-left: 22px;
}

.pods td a {
    color: var(--blue);
}

.selected td {
    background: #f0f7ff;
}

.pod {
    display: flex;
    align-items: center;
    gap: 11px;
}

input[type="checkbox"] {
    appearance: none;
    display: flex;
    align-items: center;
    justify-content: center;
    flex: none;
    width: 22px;
    height: 22px;
    border: 1px solid var(--border);
    border-radius: 5px;
    background: #fff;
}

input[type="checkbox"]:checked,
input[type="checkbox"].some {
    border-color: var(--blue);
    background: var(--blue);
}

input[type="checkbox"]:checked::after {
    content: "";
    width: 6px;
    height: 11px;
    margin-bottom: 3px;
    border: solid #fff;
    border-width: 0 2px 2px 0;
    transform: rotate(42deg);
}

input[type="checkbox"].some::after {
    content: "";
    width: 8px;
    height: 8px;
    border-radius: 1px;
    background: #fff;
}

.clip {
    width: 69px;
    overflow: hidden;
}

.ns {
    display: inline-block;
    padding: 0 8px;
    border-radius: 4px;
    color: var(--blue);
    background: var(--tag-blue);
}

.ops {
    display: flex;
    gap: 15px;
}

.more {
    display: flex;
    align-items: center;
    gap: 10px;
}

.more svg {
    color: var(--blue);
}

.more.open svg {
    transform: rotate(180deg);
}

.more-wrap {
    position: relative;
}

.dropdown {
    position: absolute;
    top: calc(100% + 6px);
    right: -2px;
    width: 166px;
    padding: 11px 0 12px 16px;
    border-radius: 7px;
    background: #fff;
    box-shadow: 0 4px 24px rgba(0, 0, 0, 0.16);
}

.dropdown li {
    display: flex;
    height: 41px;
}

.pods .dropdown a {
    height: 40px;
    padding: 0 10px 0 9px;
    line-height: 36px;
    border: 3px solid transparent;
    color: #333;
}

.pods .dropdown .marked {
    border-color: #ee1c25;
}

.drawer-foot {
    display: flex;
    justify-content: flex-end;
    height: 90px;
    padding: 33px 22px 0;
    border-top: 1px solid var(--line);
}

.close {
    height: 38px;
    padding: 0 35px;
    border-radius: 19px;
    color: #fff;
    background: var(--text);
}
```
